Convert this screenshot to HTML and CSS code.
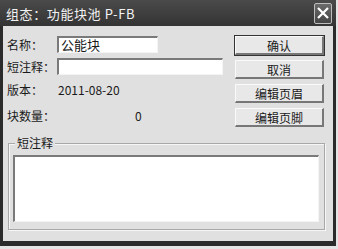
FILE: index.html
```html
<!DOCTYPE html>
<html lang="zh-CN">
<head>
    <meta charset="UTF-8">
    <title>组态：功能块池 P-FB</title>
    <link rel="stylesheet" href="styles.css">
</head>
<body>
    <div class="window">
        <div class="titlebar">
            <span class="title">组态：功能块池 P-FB</span>
            <div class="close">
                <svg width="12" height="12" viewBox="0 0 12 12">
                    <path d="M1 1 L11 11 M11 1 L1 11" stroke="#fff" stroke-width="2.2" fill="none"/>
                </svg>
            </div>
        </div>
        <div class="content">
            <div class="top">
                <div class="fields">
                    <div class="row r1">
                        <span class="label">名称：</span>
                        <div class="input name">公能块</div>
                    </div>
                    <div class="row r2">
                        <span class="label">短注释：</span>
                        <div class="input note"></div>
                    </div>
                    <div class="row r3">
                        <span class="label">版本：</span>
                        <span class="value">2011-08-20</span>
                    </div>
                    <div class="row r4">
                        <span class="label">块数量：</span>
                        <span class="value count">0</span>
                    </div>
                </div>
                <div class="buttons">
                    <button class="btn default">确认</button>
                    <button class="btn">取消</button>
                    <button class="btn">编辑页眉</button>
                    <button class="btn">编辑页脚</button>
                </div>
            </div>
            <div class="group">
                <span class="legend">短注释</span>
                <div class="memo"></div>
            </div>
        </div>
    </div>
</body>
</html>
```

FILE: styles.css
```css
body {
    margin: 0;
    background-color: #e4e4e4;
    font-family: "Noto Sans CJK SC", "DejaVu Sans", sans-serif;
    font-size: 12px;
    color: #1a1a1a;
}

.window {
    width: 336px;
    height: 246px;
    box-sizing: border-box;
    border: 3px solid #2b2b2b;
    border-bottom-width: 5px;
    border-top: none;
    background-color: #e0e0e0;
    display: flex;
    flex-direction: column;
}

.titlebar {
    height: 26px;
    margin: 0 -3px;
    background: linear-gradient(#4a4a4a, #343434);
    display: flex;
    align-items: center;
    justify-content: space-between;
    padding: 0 4px 0 6px;
}

.title {
    color: #f2f2f2;
    font-size: 13px;
    letter-spacing: 0.6px;
}

.close {
    width: 16px;
    height: 19px;
    border: 1px solid #bdbdbd;
    border-radius: 2px;
    background: linear-gradient(#6a6a6a, #454545);
    display: flex;
    align-items: center;
    justify-content: center;
}

.content {
    flex: 1;
    padding: 9px 4px 0 4px;
}

.top {
    display: flex;
    justify-content: space-between;
}

.row {
    display: flex;
    align-items: center;
    height: 18px;
}

.r2 { margin-top: 4px; }
.r3 { margin-top: 5px; }
.r4 { margin-top: 8px; }

.label {
    width: 50px;
}

.input {
    height: 17px;
    box-sizing: border-box;
    background-color: #fff;
    border-top: 2px solid #7a7a7a;
    border-left: 2px solid #7a7a7a;
    border-right: 1px solid #f4f4f4;
    border-bottom: 1px solid #f4f4f4;
    padding-left: 2px;
    line-height: 14px;
    font-size: 13px;
}

.name { width: 101px; }
.note { width: 166px; }

.value {
    padding-left: 1px;
}

.count {
    padding-left: 78px;
}

.buttons {
    display: flex;
    flex-direction: column;
    gap: 5px;
    margin-top: 1px;
    margin-right: 5px;
}

.btn {
    width: 89px;
    height: 19px;
    padding: 0;
    font-family: inherit;
    font-size: 12px;
    color: #1a1a1a;
    background-color: #e8e8e8;
    border-top: 1px solid #fafafa;
    border-left: 1px solid #fafafa;
    border-right: 2px solid #777;
    border-bottom: 2px solid #777;
}

.btn.default {
    outline: 1px solid #333;
}

.group {
    position: relative;
    margin: 16px 4px 0 1px;
    height: 87px;
    border: 1px solid #a8a8a8;
    box-shadow: inset 1px 1px 0 #f6f6f6, 1px 1px 0 #f6f6f6;
    padding: 11px 5px 0 4px;
    box-sizing: border-box;
}

.legend {
    position: absolute;
    top: -10px;
    left: 6px;
    padding: 0 2px;
    background-color: #e0e0e0;
    font-size: 12px;
}

.memo {
    height: 64px;
    background-color: #fff;
    border-top: 2px solid #7a7a7a;
    border-left: 2px solid #7a7a7a;
    border-right: 1px solid #f4f4f4;
    border-bottom: 1px solid #f4f4f4;
}
```
